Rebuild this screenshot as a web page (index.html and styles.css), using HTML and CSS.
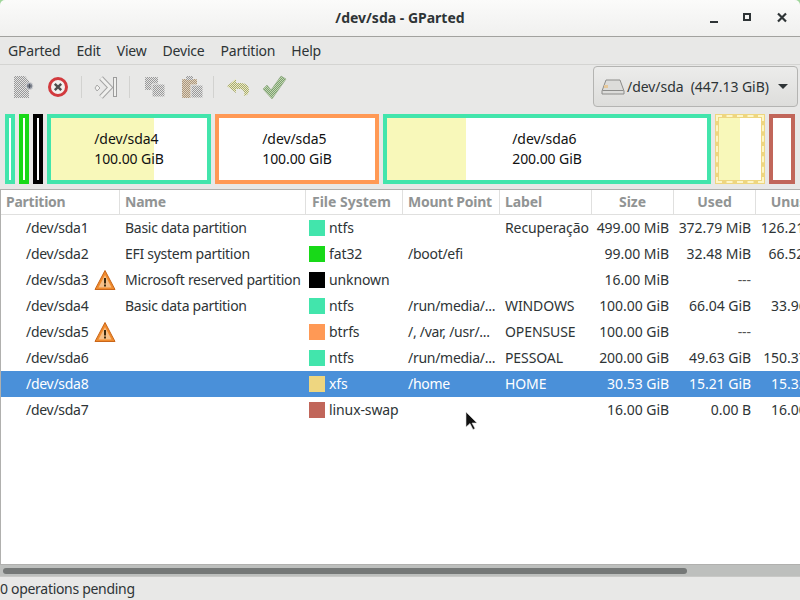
FILE: index.html
```html
<!DOCTYPE html>
<html lang="en">
<head>
<meta charset="utf-8">
<title>/dev/sda - GParted</title>
<link rel="stylesheet" href="styles.css">
</head>
<body>
<svg class="defs" width="0" height="0" aria-hidden="true">
  <defs>
    <pattern id="dg" width="2" height="2" patternUnits="userSpaceOnUse"><rect width="2" height="2" fill="#e4e4e2"/><rect width="1" height="1" fill="#98989a"/><rect x="1" y="1" width="1" height="1" fill="#98989a"/></pattern>
    <pattern id="dt" width="2" height="2" patternUnits="userSpaceOnUse"><rect width="2" height="2" fill="#e2d4bc"/><rect width="1" height="1" fill="#a89580"/><rect x="1" y="1" width="1" height="1" fill="#a89580"/></pattern>
    <pattern id="dy" width="2" height="2" patternUnits="userSpaceOnUse"><rect width="2" height="2" fill="#efeebc"/><rect width="1" height="1" fill="#a3a678"/><rect x="1" y="1" width="1" height="1" fill="#a3a678"/></pattern>
    <pattern id="dc" width="2" height="2" patternUnits="userSpaceOnUse"><rect width="2" height="2" fill="#c4d8ae"/><rect width="1" height="1" fill="#7a9e74"/><rect x="1" y="1" width="1" height="1" fill="#7a9e74"/></pattern>
  </defs>
</svg>
<div class="window">
  <header class="titlebar">
    <div class="title">/dev/sda - GParted</div>
    <div class="wm">
      <svg width="14" height="14" viewBox="0 0 14 14"><rect x="3" y="10" width="8" height="2" fill="#2e3436"/></svg>
      <svg width="14" height="14" viewBox="0 0 14 14"><rect x="3" y="3" width="6" height="6" fill="none" stroke="#2e3436" stroke-width="2"/></svg>
      <svg width="14" height="14" viewBox="0 0 14 14"><path d="M3 2.500l8 8M11 2.500l-8 8" stroke="#2e3436" stroke-width="2.200" fill="none"/></svg>
    </div>
  </header>
  <div class="content">
  <nav class="menubar">
    <span>GParted</span><span>Edit</span><span>View</span><span>Device</span><span>Partition</span><span>Help</span>
  </nav>
  <div class="toolbar">
    <div class="tools">
      <svg class="t-new" width="24" height="24" viewBox="0 0 24 24"><path d="M2 1h11l4 5v17H2z" fill="url(#dg)"/><circle cx="17.500" cy="11" r="3.500" fill="#8f95a0" stroke="#d4d4d6"/><path d="M15.500 11h4M17.500 9v4" stroke="#50555d"/></svg>
      <svg class="t-del" width="22" height="22" viewBox="0 0 22 22"><circle cx="11" cy="11" r="8.500" fill="#f2f0ee" stroke="#d23a3e" stroke-width="3"/><path d="M7.800 7.800l6.400 6.400M14.200 7.800l-6.400 6.400" stroke="#4e4e4e" stroke-width="2.400"/></svg>
      <i class="sep sep-a"></i>
      <svg class="t-res" width="24" height="24" viewBox="0 0 24 24"><path d="M3 10l3 3-3 3-2-3z" fill="#f2f2f0" stroke="#a8a8a8"/><path d="M7 3l9 9.500-9 9.500" fill="none" stroke="#a4a4a4" stroke-width="5" stroke-linejoin="miter"/><path d="M7 3l9 9.500-9 9.500" fill="none" stroke="#f0f0ee" stroke-width="3"/><rect x="19.500" y="2.500" width="3" height="19" fill="#efefed" stroke="#9c9c9c"/></svg>
      <i class="sep sep-b"></i>
      <svg class="t-copy" width="22" height="22" viewBox="0 0 22 22"><rect x="1" y="1" width="13" height="13" rx="1" fill="url(#dg)"/><rect x="8" y="8" width="13" height="13" rx="1" fill="url(#dg)" stroke="#e8e8e7"/></svg>
      <svg class="t-paste" width="24" height="24" viewBox="0 0 24 24"><rect x="2" y="4" width="15" height="19" rx="1" fill="url(#dt)"/><rect x="6" y="1" width="7" height="4" fill="url(#dg)"/><rect x="11" y="10" width="12" height="13" fill="url(#dg)" stroke="#e8e8e7"/></svg>
      <i class="sep sep-c"></i>
      <svg class="t-undo" width="24" height="24" viewBox="0 0 24 24"><path d="M1 11l9-7v4h5c5 0 8 3 8 7 0 2-1 4-2 5l-4 1c1-1 2-2 1-4-1-2-2-3-4-3h-4v4z" fill="url(#dy)"/></svg>
      <svg class="t-apply" width="26" height="26" viewBox="0 0 26 26"><path d="M2 15l4-4 4 5L20 2l5 3-14 20z" fill="url(#dc)" stroke="#8fa981" stroke-width=".6"/></svg>
    </div>
    <div class="device">
      <svg width="24" height="18" viewBox="0 0 24 18"><path d="M5 2h14l4 11v3H1v-3z" fill="#dcdcda" stroke="#8c8c8a"/><path d="M1.500 12.500h21" stroke="#8c8c8a"/><rect x="3" y="7" width="4" height="3" fill="#e6c89a"/></svg>
      <span class="dev-name">/dev/sda&nbsp;&nbsp;(447.13 GiB)</span>
      <i class="caret"></i>
    </div>
  </div>
  <div class="graph">
    <div class="part c-ntfs w10"></div>
    <div class="part c-fat w10"></div>
    <div class="part c-unk w10"></div>
    <div class="part c-ntfs w164"><b class="usedbar u106"></b><div class="plabel"><span>/dev/sda4</span><span>100.00 GiB</span></div></div>
    <div class="part c-btrfs w164"><div class="plabel"><span>/dev/sda5</span><span>100.00 GiB</span></div></div>
    <div class="part c-ntfs w328"><b class="usedbar u82"></b><div class="plabel"><span>/dev/sda6</span><span>200.00 GiB</span></div></div>
    <div class="part c-xfs w50"><b class="usedbar u24"></b></div>
    <div class="part c-swap w26"></div>
  </div>
  <div class="tree">
    <div class="table">
      <div class="row head">
        <span class="c1">Partition</span><span class="c2">Name</span><span class="c3">File System</span><span class="c4">Mount Point</span><span class="c5">Label</span><span class="c6">Size</span><span class="c7">Used</span><span class="c8">Unused</span>
      </div>
      <div class="row"><span class="c1">/dev/sda1</span><span class="c2">Basic data partition</span><span class="c3"><i class="sw s-ntfs"></i>ntfs</span><span class="c4"></span><span class="c5">Recuperação</span><span class="c6">499.00 MiB</span><span class="c7">372.79 MiB</span><span class="c8">126.21 MiB</span></div>
      <div class="row"><span class="c1">/dev/sda2</span><span class="c2">EFI system partition</span><span class="c3"><i class="sw s-fat"></i>fat32</span><span class="c4">/boot/efi</span><span class="c5"></span><span class="c6">99.00 MiB</span><span class="c7">32.48 MiB</span><span class="c8">66.52 MiB</span></div>
      <div class="row"><span class="c1">/dev/sda3<svg class="warn" width="22" height="22" viewBox="0 0 22 22"><path d="M11 1.500L21 20.500H1z" fill="#f08a2c" stroke="#c9661a" stroke-linejoin="round"/><path d="M11 6L17.500 18.500H4.500z" fill="#f5c089"/><rect x="10" y="9" width="2" height="5.500" fill="#3a2a10"/><rect x="10" y="15.500" width="2" height="2" fill="#3a2a10"/></svg></span><span class="c2">Microsoft reserved partition</span><span class="c3"><i class="sw s-unk"></i>unknown</span><span class="c4"></span><span class="c5"></span><span class="c6">16.00 MiB</span><span class="c7 dash">---</span><span class="c8"></span></div>
      <div class="row"><span class="c1">/dev/sda4</span><span class="c2">Basic data partition</span><span class="c3"><i class="sw s-ntfs"></i>ntfs</span><span class="c4">/run/media/...</span><span class="c5">WINDOWS</span><span class="c6">100.00 GiB</span><span class="c7">66.04 GiB</span><span class="c8">33.96 GiB</span></div>
      <div class="row"><span class="c1">/dev/sda5<svg class="warn" width="22" height="22" viewBox="0 0 22 22"><path d="M11 1.500L21 20.500H1z" fill="#f08a2c" stroke="#c9661a" stroke-linejoin="round"/><path d="M11 6L17.500 18.500H4.500z" fill="#f5c089"/><rect x="10" y="9" width="2" height="5.500" fill="#3a2a10"/><rect x="10" y="15.500" width="2" height="2" fill="#3a2a10"/></svg></span><span class="c2"></span><span class="c3"><i class="sw s-btrfs"></i>btrfs</span><span class="c4">/, /var, /usr/...</span><span class="c5">OPENSUSE</span><span class="c6">100.00 GiB</span><span class="c7 dash">---</span><span class="c8"></span></div>
      <div class="row"><span class="c1">/dev/sda6</span><span class="c2"></span><span class="c3"><i class="sw s-ntfs"></i>ntfs</span><span class="c4">/run/media/...</span><span class="c5">PESSOAL</span><span class="c6">200.00 GiB</span><span class="c7">49.63 GiB</span><span class="c8">150.37 GiB</span></div>
      <div class="row sel"><span class="c1">/dev/sda8</span><span class="c2"></span><span class="c3"><i class="sw s-xfs"></i>xfs</span><span class="c4">/home</span><span class="c5">HOME</span><span class="c6">30.53 GiB</span><span class="c7">15.21 GiB</span><span class="c8">15.32 GiB</span></div>
      <div class="row"><span class="c1">/dev/sda7</span><span class="c2"></span><span class="c3"><i class="sw s-swap"></i>linux-swap</span><span class="c4"></span><span class="c5"></span><span class="c6">16.00 GiB</span><span class="c7">0.00 B</span><span class="c8">16.00 GiB</span></div>
    </div>
    <svg class="cursor" width="14" height="20" viewBox="0 0 14 20"><path d="M1 1v15l4-3.500 3 6 2-1-3-5.500h5z" fill="#111" stroke="#ddd" stroke-width=".6"/></svg>
  </div>
  <div class="hscroll"><i class="thumb"></i></div>
  <footer class="status">0 operations pending</footer>
  </div>
</div>
</body>
</html>
```
FILE: styles.css
```css
html, body { margin: 0; padding: 0; }
body { width: 800px; height: 600px; overflow: hidden; background: #9fd69a; font-family: "Noto Sans", sans-serif; font-size: 14px; color: #2e3436; }
.defs { position: absolute; }
.window { display: flex; flex-direction: column; height: 600px; }
.content { flex: 1; min-height: 0; display: flex; flex-direction: column; background: #e8e8e7; }

.titlebar { height: 37px; box-sizing: border-box; flex: none; display: flex; align-items: center; justify-content: center; background: linear-gradient(#fbfbfa, #f0f0ef); border-bottom: 1px solid #a2a29f; position: relative; border-radius: 5px 5px 0 0; padding-bottom: 2px; }
.title { font-weight: 700; color: #2e3436; }
.wm { position: absolute; right: 0; top: 0; height: 36px; display: flex; align-items: center; gap: 20px; padding-right: 11px; }

.menubar { height: 28px; box-sizing: border-box; flex: none; display: flex; align-items: center; gap: 16px; padding-left: 8px; border-bottom: 1px solid #d4d4d2; letter-spacing: -.2px; }

.toolbar { height: 43px; flex: none; display: flex; align-items: center; justify-content: space-between; padding-right: 2px; }
.tools { display: flex; align-items: center; padding-left: 12px; }
.t-del { margin-left: 11px; }
.sep { width: 1px; height: 22px; background: #d2d2d0; display: block; }
.sep-a { margin-left: 12px; }
.t-res { margin-left: 12px; }
.sep-b { margin-left: 11px; }
.t-copy { margin-left: 14px; }
.t-paste { margin-left: 14px; }
.sep-c { margin-left: 9px; }
.t-undo { margin-left: 12px; }
.t-apply { margin-left: 11px; }
.device { width: 205px; height: 41px; box-sizing: border-box; display: flex; align-items: center; gap: 2px; padding: 0 9px 0 7px; border: 1px solid #b4b4b2; border-radius: 4px; background: linear-gradient(#ececeb, #dddddb); letter-spacing: -.05px; }
.dev-name { flex: 1; white-space: nowrap; }
.caret { width: 0; height: 0; border-left: 5px solid transparent; border-right: 5px solid transparent; border-top: 5px solid #2e3436; }

.graph { height: 70px; flex: none; display: flex; gap: 4px; padding: 6px 5px 5px; }
.part { position: relative; box-sizing: border-box; height: 70px; border: 4px solid; background: #fff; display: flex; flex: none; color: #111; }
.w10 { width: 10px; } .w164 { width: 164px; } .w328 { width: 328px; } .w50 { width: 50px; } .w26 { width: 26px; }
.c-ntfs { border-color: #42e5ac; } .c-fat { border-color: #18d918; } .c-unk { border-color: #000; }
.c-btrfs { border-color: #ff9955; } .c-swap { border-color: #c1665a; }
.c-xfs { border-color: #eed680; }
.c-xfs::after { content: ""; position: absolute; inset: -3px; border: 2px dashed #fdf6c8; }
.usedbar { display: block; position: absolute; left: 0; top: 0; bottom: 0; background: #f8f8ba; }
.u106 { width: 103px; } .u82 { width: 79px; } .u24 { width: 21px; }
.plabel { position: relative; margin: auto; display: flex; flex-direction: column; line-height: 20px; letter-spacing: -.08px; }

.tree { flex: 1; min-height: 0; position: relative; overflow: hidden; background: #fff; border: 1px solid #b0b0ae; border-width: 1px 0 1px 1px; }
.table { width: 799px; overflow: hidden; }
.row { display: grid; grid-template-columns: 119px 186px 97px 97px 92px 82px 82px 82px; height: 26px; align-items: center; white-space: nowrap; color: #2e3436; letter-spacing: -.28px; }
.row > span { overflow: hidden; display: flex; align-items: center; height: 26px; box-sizing: border-box; padding: 0 0 2px 5px; }
.row > .c1 { padding-left: 25px; }
.row > .c3 { padding-left: 3px; letter-spacing: -.1px; }
.row > .c5 { letter-spacing: -.1px; }
.row > .c6, .row > .c7, .row > .c8 { justify-content: flex-end; padding: 0 5px 2px 0; letter-spacing: -.05px; }
.row > .dash { color: #555; }
.row.head { height: 25px; box-sizing: border-box; color: #919494; font-weight: 700; border-bottom: 1px solid #e0e0df; letter-spacing: -.25px; }
.row.head > span { height: 24px; border-right: 1px solid #e0e0df; justify-content: flex-start; padding: 0 0 2px 5px; }
.row.head > .c3 { padding-left: 6px; letter-spacing: 0; }
.row.head > .c6, .row.head > .c7, .row.head > .c8 { justify-content: center; padding: 0 0 2px; overflow: visible; }
.row.head > .c8 { border-right: 0; }
.row.sel { background: #4a90d9; color: #fff; }
.sw { width: 16px; height: 16px; margin-right: 4px; display: block; flex: none; position: relative; top: 1px; }
.s-ntfs { background: #42e5ac; } .s-fat { background: #18d918; } .s-unk { background: #000; } .s-btrfs { background: #ff9955; } .s-xfs { background: #eed680; } .s-swap { background: #c1665a; }
.warn { margin-left: 6px; flex: none; position: relative; top: 1px; }
.cursor { position: absolute; left: 464px; top: 221px; }

.hscroll { height: 11px; flex: none; display: flex; align-items: flex-start; background: #bdbfbd; border-bottom: 1px solid #c8c8c6; padding: 0 3px; }
.thumb { display: block; width: 684px; height: 6px; margin-top: 3px; background: #757877; border-radius: 3px; }
.status { flex: none; height: 23px; display: flex; align-items: center; padding: 0 0 1px; box-sizing: border-box; letter-spacing: -.3px; color: #2e3436; }
```
